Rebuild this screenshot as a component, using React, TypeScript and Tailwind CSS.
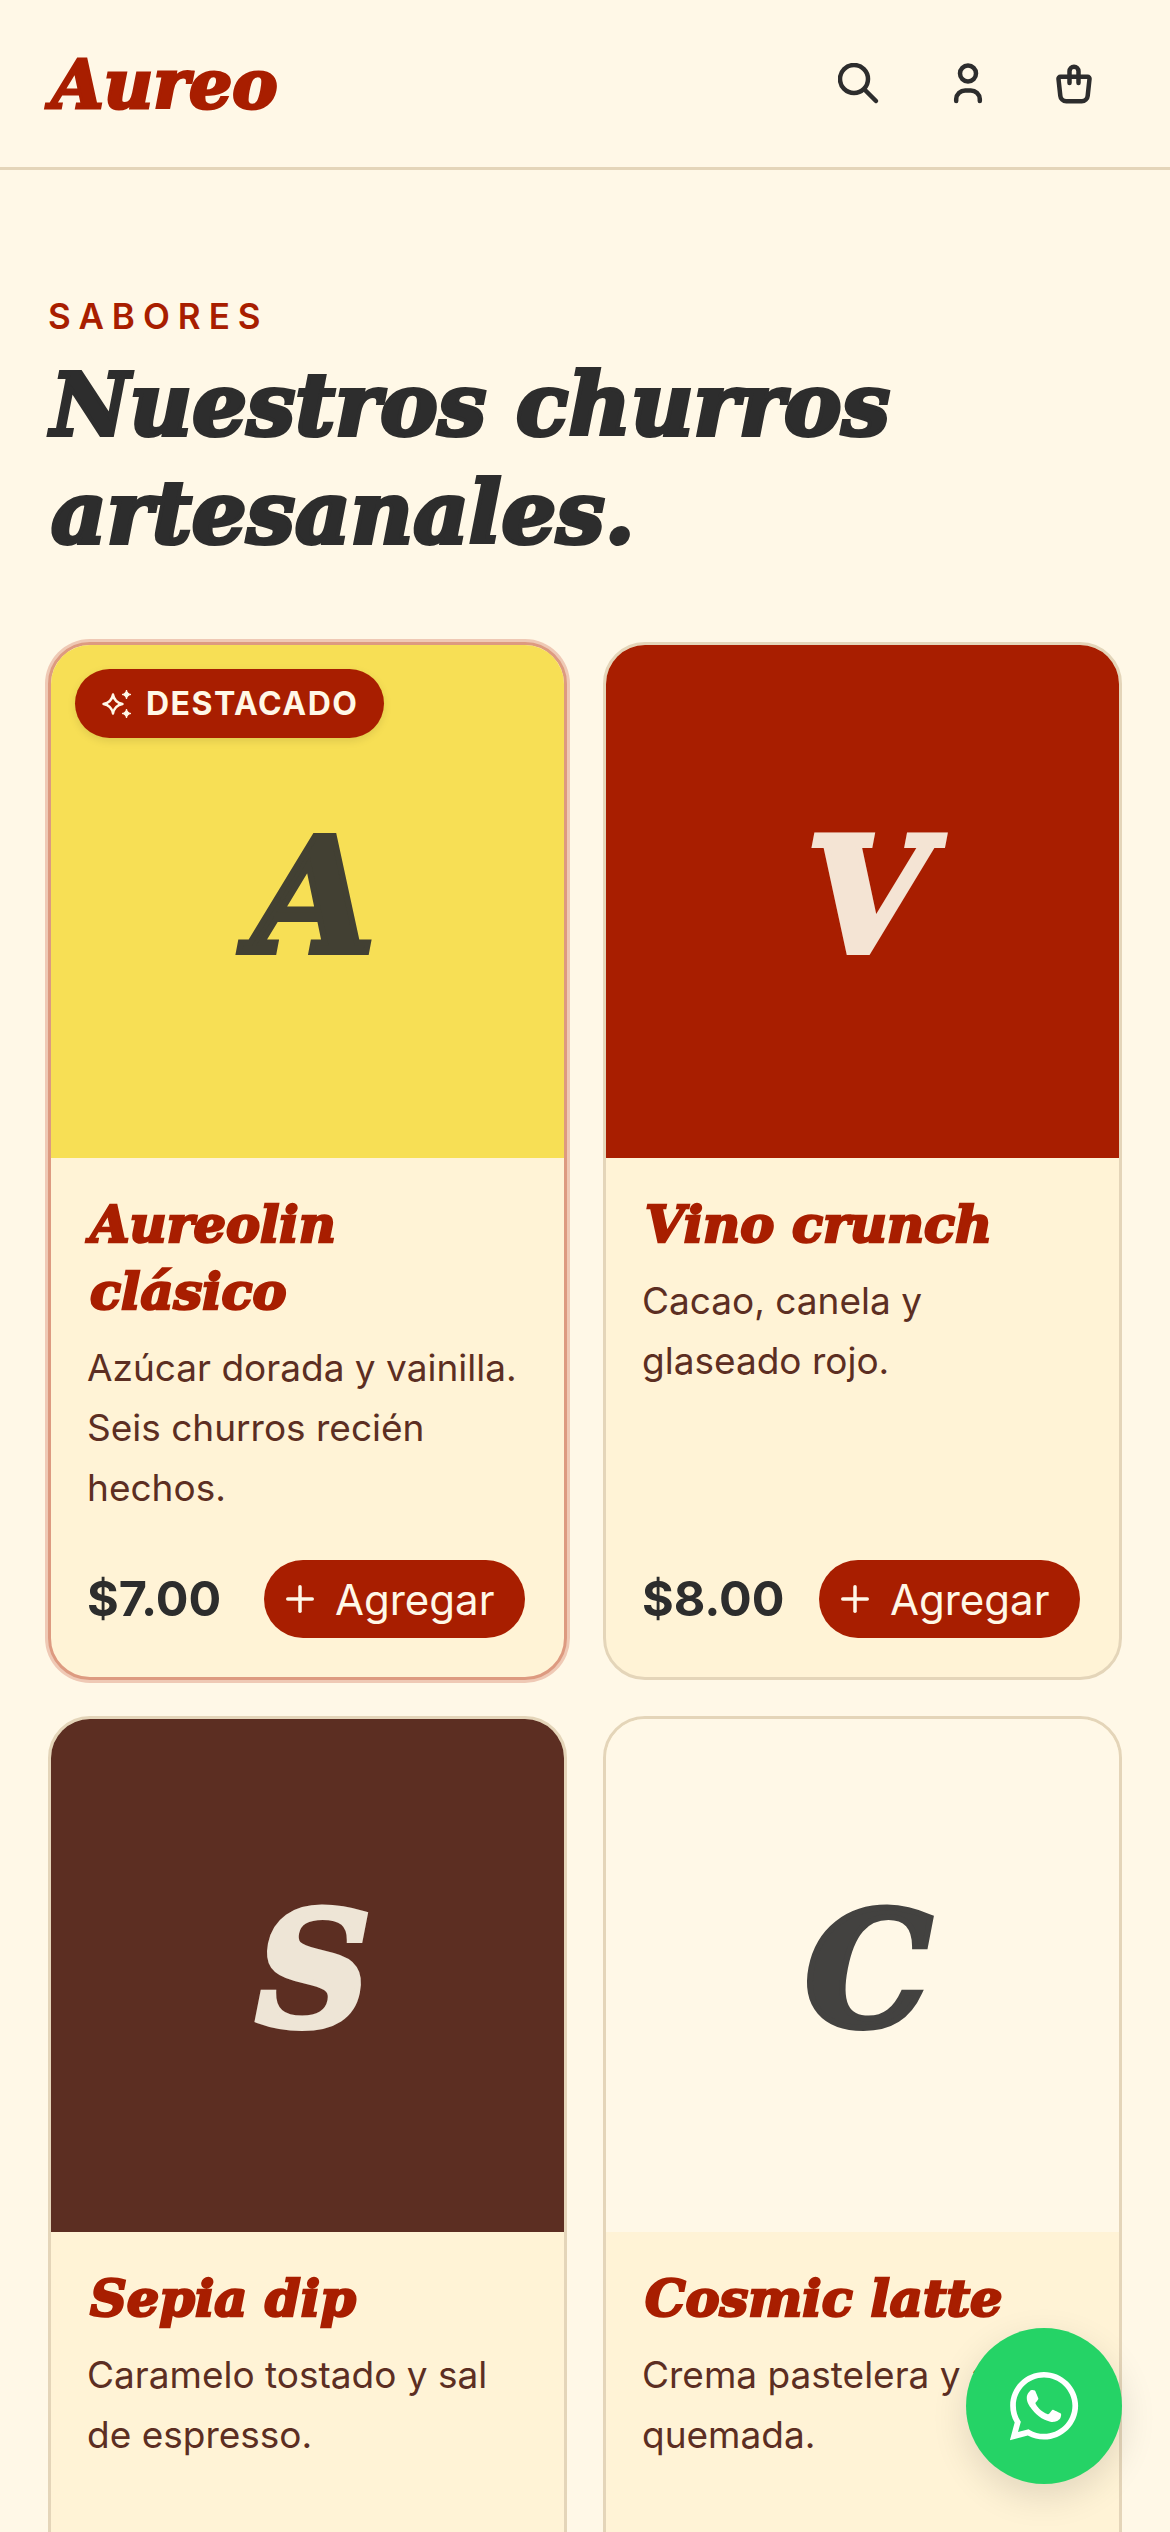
import { Plus } from "lucide-react";
import { FaWhatsapp } from "react-icons/fa";

const display = "font-['DejaVu_Serif',serif] font-bold italic";
const sans = "font-['Inter',sans-serif]";

type Item = {
  name: string;
  desc: string;
  price: string;
  letter: string;
  art: string;
  ink: string;
  featured?: boolean;
};

const items: Item[] = [
  { name: "Aureolin clásico", desc: "Azúcar dorada y vainilla.\nSeis churros recién\nhechos.", price: "$7.00", letter: "A", art: "bg-[#f7df55]", ink: "text-[#424033]", featured: true },
  { name: "Vino crunch", desc: "Cacao, canela y\nglaseado rojo.", price: "$8.00", letter: "V", art: "bg-[#a81e00]", ink: "text-[#f4e4d4]" },
  { name: "Sepia dip", desc: "Caramelo tostado y sal\nde espresso.", price: "$8.00", letter: "S", art: "bg-[#5c2e22]", ink: "text-[#eee5d6]" },
  { name: "Cosmic latte", desc: "Crema pastelera y azúcar\nquemada.", price: "$8.50", letter: "C", art: "bg-[#fff8e7]", ink: "text-[#434240]" },
];

function SearchIcon() {
  return (
    <svg viewBox="0 0 42 42" className="h-[42px] w-[42px]" fill="none" stroke="#2d2d2d" strokeWidth="4.5" strokeLinecap="round">
      <circle cx="16" cy="16" r="14" />
      <path d="M26.500 26.500L38 38" />
    </svg>
  );
}

function UserIcon() {
  return (
    <svg viewBox="0 0 30 42" className="h-[42px] w-[30px]" fill="none" stroke="#2d2d2d" strokeWidth="4.5" strokeLinecap="round">
      <circle cx="15" cy="10.500" r="8" />
      <path d="M3.200 38v-2a9 9 0 0 1 9-8.500h5.600a9 9 0 0 1 9 8.500v2" />
    </svg>
  );
}

function BagIcon() {
  return (
    <svg viewBox="0 0 36 42" className="h-[42px] w-[36px]" fill="none" stroke="#2d2d2d" strokeWidth="4.500" strokeLinecap="round" strokeLinejoin="round">
      <path d="M4.500 13.750h27a2 2 0 0 1 2 2.300l-1.800 16.700a6 6 0 0 1-6 5.500H10.300a6 6 0 0 1-6-5.500L2.500 16.050a2 2 0 0 1 2-2.300z" />
      <path d="M13.500 20V8.250a4.500 4.500 0 0 1 9 0V20" />
    </svg>
  );
}

function BadgeStars() {
  return (
    <svg viewBox="0 0 30 30" className="h-[30px] w-[30px]" fill="none" stroke="#fff8e7" strokeWidth="2.400" strokeLinejoin="round">
      <path d="M11 5.500c1 5.500 4 8.500 9.500 9.500-5.500 1-8.500 4-9.500 9.500-1-5.500-4-8.500-9.500-9.500 5.500-1 8.500-4 9.500-9.500z" />
      <path d="M24.500 1c.6 2.700 1.800 3.900 4.500 4.500-2.700.6-3.900 1.800-4.500 4.500-.6-2.700-1.800-3.900-4.500-4.500 2.700-.6 3.900-1.800 4.500-4.500z" fill="#fff8e7" strokeWidth="1" />
      <path d="M24.500 20c.6 2.700 1.800 3.900 4.500 4.500-2.700.6-3.900 1.800-4.500 4.500-.6-2.700-1.800-3.900-4.500-4.500 2.700-.6 3.900-1.800 4.500-4.500z" fill="#fff8e7" strokeWidth="1" />
    </svg>
  );
}

function Card({ item }: { item: Item }) {
  return (
    <article
      className={`flex h-[1038px] flex-col overflow-hidden rounded-[42px] border-[3px] bg-[#fff3d6] ${
        item.featured ? "border-[#dd9a80] shadow-[0_0_0_3px_#efc9b5]" : "border-[#e4d5b9]"
      }`}
    >
      <div className={`relative flex h-[513px] shrink-0 items-center justify-center ${item.art}`}>
        {item.featured && (
          <span className={`absolute left-[24px] top-[24px] flex h-[69px] w-[309px] items-center gap-[14px] rounded-full bg-[#a81e00] pl-[27px] text-[32px] font-bold tracking-[1.5px] text-[#fff8e7] shadow-[0_3px_9px_rgba(0,0,0,0.1)] ${sans}`}>
            <BadgeStars />
            DESTACADO
          </span>
        )}
        <span className={`pb-[12px] pl-[12px] text-[160px] leading-none ${display} ${item.ink} [-webkit-text-stroke:6px_currentColor]`}>
          {item.letter}
        </span>
      </div>
      <div className="flex flex-1 flex-col pb-[39px] pl-[36px] pr-[39px] pt-[33px]">
        <h3 className={`pl-[3px] text-[51px] leading-[67px] text-[#a81e00] [-webkit-text-stroke:2.5px_#a81e00] ${display}`}>{item.name}</h3>
        <p className={`mt-[13px] whitespace-pre text-[37px] leading-[60px] text-[#5c2e22] ${sans}`}>{item.desc}</p>
        <div className="mt-auto flex items-center justify-between">
          <span className={`text-[48.5px] font-bold text-[#2d2d2d] ${sans}`}>{item.price}</span>
          <button className={`flex h-[78px] w-[261px] items-center gap-[14px] rounded-full bg-[#a81e00] pl-[15px] text-[42px] text-[#fff8e7] ${sans}`}>
            <Plus size={42} strokeWidth={2} />
            Agregar
          </button>
        </div>
      </div>
    </article>
  );
}

export default function App() {
  return (
    <div className="relative h-[2532px] overflow-hidden bg-[#fff8e7]">
      <header className="flex h-[170px] items-center justify-between border-b-[3px] border-[#e4d5b9] px-[48px]">
        <span className={`pl-[3px] text-[68px] leading-none text-[#a81e00] [-webkit-text-stroke:3px_#a81e00] ${display}`}>Aureo</span>
        <div className="flex items-center gap-[73px] pr-[30px]">
          <SearchIcon />
          <UserIcon />
          <BagIcon />
        </div>
      </header>
      <main className="px-[48px] pt-[126px]">
        <p className={`text-[35px] font-semibold leading-[40px] tracking-[8px] text-[#a81e00] ${sans}`}>SABORES</p>
        <h1 className={`mt-[15px] pl-[3px] text-[86px] leading-[108px] text-[#2d2d2d] [-webkit-text-stroke:4px_#2d2d2d] ${display}`}>
          Nuestros churros
          <br />
          artesanales.
        </h1>
        <div className="mt-[75px] grid grid-cols-[519px_519px] gap-[36px]">
          {items.map((item) => (
            <Card key={item.letter} item={item} />
          ))}
        </div>
      </main>
      <a className="fixed bottom-[48px] right-[48px] flex h-[156px] w-[156px] items-center justify-center rounded-full bg-[#25d366] text-white shadow-[0_12px_36px_rgba(0,0,0,0.12)]">
        <FaWhatsapp size={78} />
      </a>
    </div>
  );
}
